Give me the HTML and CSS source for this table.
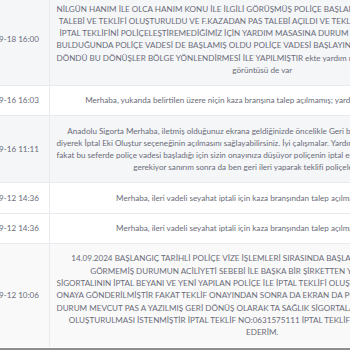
FILE: index.html
```html
<!DOCTYPE html>
<html lang="tr">
<head>
<meta charset="utf-8">
<title>Talep Geçmişi</title>
<link rel="stylesheet" href="styles.css">
</head>
<body>
<div class="viewport">
  <div class="scroller">
    <table class="log">
      <colgroup><col class="c-date"><col class="c-msg"></colgroup>
      <tbody>
        <tr class="shade">
          <td class="date">2024-09-18 16:00</td>
          <td class="msg">NİLGÜN HANIM İLE OLCA HANIM KONU İLE İLGİLİ GÖRÜŞMÜŞ POLİÇE BAŞLANGIÇ TARİHİ GELMEDEN ÖNCE İPTAL<br>TALEBİ VE TEKLİFİ OLUŞTURULDU VE F.KAZADAN PAS TALEBİ AÇILDI VE TEKLİFİ POLİÇELEŞTİREMEDİK AMA<br>İPTAL TEKLİFİNİ POLİÇELEŞTİREMEDİĞİMİZ İÇİN YARDIM MASASINA DURUM İLE İLGİLİ KAYIT AÇTIK DÖNÜŞ<br>BULDUĞUNDA POLİÇE VADESİ DE BAŞLAMIŞ OLDU POLİÇE VADESİ BAŞLAYINCA DA İPTAL GERÇEKLEŞMEDİ VE<br>DÖNDÜ BU DÖNÜŞLER BÖLGE YÖNLENDİRMESİ İLE YAPILMIŞTIR ekte yardım masasının dönüşü ve sistemin ekran<br>görüntüsü de var</td>
        </tr>
        <tr>
          <td class="date">2024-09-16 16:03</td>
          <td class="msg">Merhaba, yukarıda belirtilen üzere niçin kaza branşına talep açılmamış; yardımcı olabilir misiniz lütfen</td>
        </tr>
        <tr class="shade">
          <td class="date">2024-09-16 11:11</td>
          <td class="msg">Anadolu Sigorta Merhaba, iletmiş olduğunuz ekrana geldiğinizde öncelikle Geri butonuna basarak poliçe dönüp<br>diyerek İptal Eki Oluştur seçeneğinin açılmasını sağlayabilirsiniz. İyi çalışmalar. Yardım masası olarak tekrar kontrol ettik ve gördük<br>fakat bu seferde poliçe vadesi başladığı için sizin onayınıza düşüyor poliçenin iptal edilmesi için sizin de bunu onaylamanız<br>gerekiyor sanırım sonra da ben geri ileri yaparak teklifi poliçeleştireceğim.</td>
        </tr>
        <tr>
          <td class="date">2024-09-12 14:36</td>
          <td class="msg">Merhaba, ileri vadeli seyahat iptali için kaza branşından talep açılmamıştır. Bilginize.</td>
        </tr>
        <tr>
          <td class="date">2024-09-12 14:36</td>
          <td class="msg">Merhaba, ileri vadeli seyahat iptali için kaza branşından talep açılmamıştır. Bilginize.</td>
        </tr>
        <tr class="light">
          <td class="date">2024-09-12 10:06</td>
          <td class="msg">14.09.2024 BAŞLANGIÇ TARİHLİ POLİÇE VİZE İŞLEMLERİ SIRASINDA BAŞLANGIÇ TARİHİ GEÇMİŞ OLUP<br>GÖRMEMİŞ DURUMUN ACİLİYETİ SEBEBİ İLE BAŞKA BİR ŞİRKETTEN YENİ İŞ YAPILMIŞ OLUP<br>SİGORTALININ İPTAL BEYANI VE YENİ YAPILAN POLİÇE İLE İPTAL TEKLİFİ OLUŞTURULMUŞ OLUP İPTAL TEKLİFİ<br>ONAYA GÖNDERİLMİŞTİR FAKAT TEKLİF ONAYINDAN SONRA DA EKRAN DA POLİÇE İPTAL EDİLMEDEN KALMIŞTIR<br>DURUM MEVCUT PAS A YAZILMIŞ GERİ DÖNÜŞ OLARAK TA SAĞLIK SİGORTALARI TARAFINDAN YENİ İPTAL TEKLİFİ<br>OLUŞTURULMASI İSTENMİŞTİR İPTAL TEKLİF NO:0631575111 İPTAL TEKLİFİNİN ONAYLANMASINI RİCA<br>EDERİM.</td>
        </tr>
      </tbody>
    </table>
  </div>
  <div class="hscroll"></div>
</div>
</body>
</html>
```
FILE: styles.css
```css
html, body {
  margin: 0;
  padding: 0;
  background: #ffffff;
}

.viewport {
  width: 350px;
  height: 350px;
  overflow: hidden;
  display: flex;
  flex-direction: column;
}

.scroller {
  margin: -7px 0 0 -37px;
  flex: none;
}

.log {
  border-collapse: collapse;
  table-layout: fixed;
  width: 512px;
  font-family: "Lato", "Liberation Sans", sans-serif;
  font-size: 8.1px;
  line-height: 12.3px;
  color: #6a6c78;
}

.c-date { width: 86px; }
.c-msg { width: 426px; }

.log td {
  padding: 8.5px 7px;
  text-align: center;
  vertical-align: middle;
  border-top: 1px solid #e8eaef;
  white-space: nowrap;
  overflow: hidden;
}

.log td.date {
  border-right: 1px solid #e8eaef;
}

.log tr.shade td { background: #f5f6f8; }
.log tr.light td { background: #f9f9fa; }

.hscroll {
  flex: none;
  height: 2px;
  margin-top: 1px;
  background: #8e8e8e;
  border-bottom: 1px solid #dcdcdc;
}
```
